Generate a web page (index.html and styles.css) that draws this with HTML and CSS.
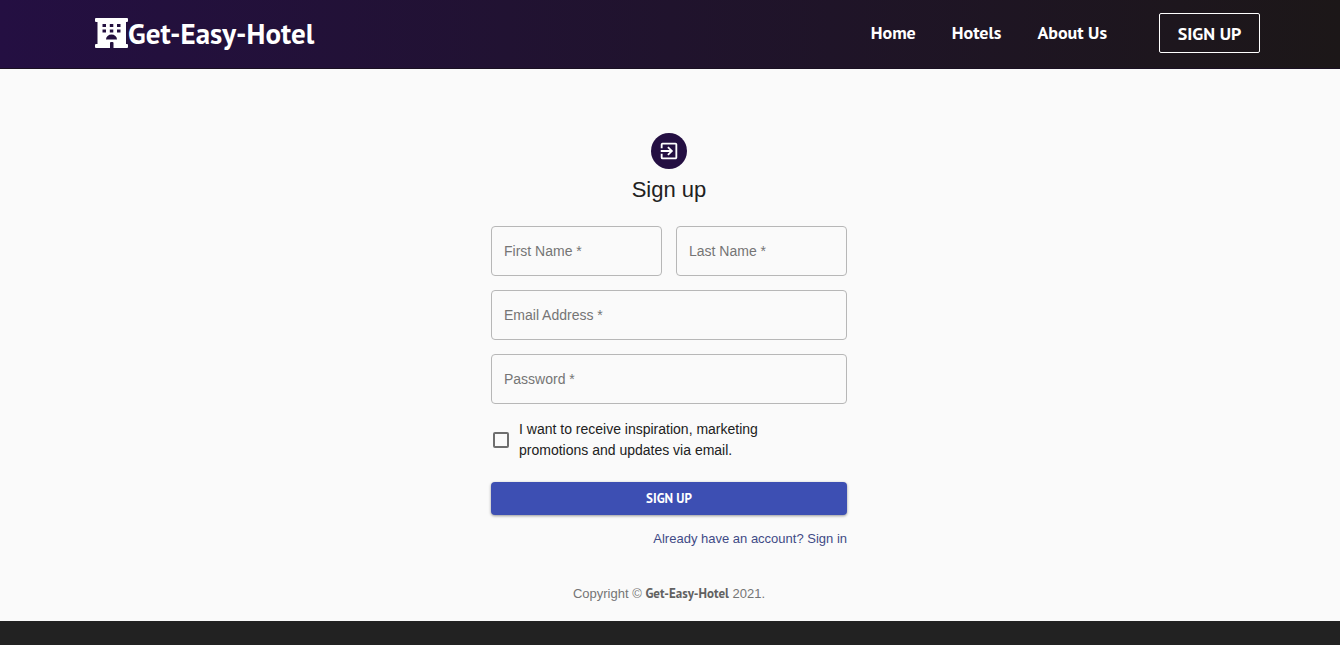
FILE: index.html
```html
<!DOCTYPE html>
<html lang="en">
<head>
<meta charset="utf-8">
<meta name="viewport" content="width=device-width, initial-scale=1">
<title>Get-Easy-Hotel</title>
<link rel="stylesheet" href="styles.css">
</head>
<body>
<header class="navbar">
  <div class="navbar-inner">
    <a class="brand" href="#">
      <svg class="brand-icon" viewBox="0 0 33 30" aria-hidden="true">
        <path fill="#fff" fill-rule="evenodd" d="M1 0H32a1 1 0 0 1 1 1V3a1 1 0 0 1-1 1H31V26H32a1 1 0 0 1 1 1V29a1 1 0 0 1-1 1H18.500V25a1 1 0 0 0-1-1H16a1 1 0 0 0-1 1V30H1a1 1 0 0 1-1-1V27a1 1 0 0 1 1-1H2.500V4H1a1 1 0 0 1-1-1V1a1 1 0 0 1 1-1ZM7.500 6V9H11V6ZM14.800 6V9H18.300V6ZM22 6V9H25.500V6ZM7.500 11.500V14.500H11V11.500ZM14.800 11.500V14.500H18.300V11.500ZM22 11.500V14.500H25.500V11.500ZM11 21.500H22a5.500 5 0 0 0-11 0Z"/>
      </svg>
      <span>Get-Easy-Hotel</span>
    </a>
    <nav class="nav">
      <a class="nav-link" href="#">Home</a>
      <a class="nav-link" href="#">Hotels</a>
      <a class="nav-link" href="#">About Us</a>
      <button class="nav-button" type="button">SIGN UP</button>
    </nav>
  </div>
</header>
<main class="signup">
  <div class="avatar">
    <svg class="avatar-icon" viewBox="0 0 24 24" aria-hidden="true">
      <path fill="#fff" d="M10.090 15.590L11.500 17l5-5-5-5-1.410 1.410L12.670 11H3v2h9.670l-2.580 2.590zM19 3H5a2 2 0 0 0-2 2v4h2V5h14v14H5v-4H3v4a2 2 0 0 0 2 2h14c1.100 0 2-.9 2-2V5c0-1.100-.9-2-2-2z"/>
    </svg>
  </div>
  <h1 class="title">Sign up</h1>
  <form class="form">
    <div class="row">
      <div class="field"><input class="input" id="first" type="text"><label class="label" for="first">First Name *</label></div>
      <div class="field"><input class="input" id="last" type="text"><label class="label" for="last">Last Name *</label></div>
    </div>
    <div class="field"><input class="input" id="email" type="email"><label class="label" for="email">Email Address *</label></div>
    <div class="field"><input class="input" id="password" type="password"><label class="label" for="password">Password *</label></div>
    <div class="consent">
      <input class="checkbox" id="updates" type="checkbox">
      <label class="consent-text" for="updates">I want to receive inspiration, marketing promotions and updates via email.</label>
    </div>
    <button class="submit" type="submit">SIGN UP</button>
    <a class="signin" href="#">Already have an account? Sign in</a>
  </form>
  <p class="copyright">Copyright © <a class="copyright-link" href="#">Get-Easy-Hotel</a> 2021.</p>
</main>
<footer class="footer"></footer>
</body>
</html>
```
FILE: styles.css
```css
*, *::before, *::after { box-sizing: border-box; }
body {
  margin: 0;
  min-height: 100vh;
  display: flex;
  flex-direction: column;
  background: #fafafa;
  font-family: "Liberation Sans", Arial, sans-serif;
  color: #212121;
}
.navbar {
  background: linear-gradient(90deg, #240f42 0%, #1c1718 100%);
  border-bottom: 1px solid #1a1022;
}
.navbar-inner {
  display: flex;
  align-items: center;
  justify-content: space-between;
  height: 68px;
  padding: 0 80px 2px 95px;
}
.brand, .nav-link, .nav-button, .submit, .copyright-link {
  font-family: "PT Sans", "Noto Sans", sans-serif;
  font-weight: 700;
  text-decoration: none;
}
.brand {
  display: flex;
  align-items: center;
  font-size: 29px;
  line-height: 32px;
  color: #fff;
}
.brand-icon { width: 33px; height: 30px; }
.nav { display: flex; align-items: center; gap: 36px; }
.nav-link { font-size: 18px; line-height: 24px; color: #fff; }
.nav-button {
  width: 101px;
  height: 40px;
  margin-left: 16px;
  padding: 0;
  font-size: 18px;
  color: #fff;
  background: transparent;
  border: 1px solid #fff;
  border-radius: 2px;
}
.signup {
  flex: 1;
  width: 100%;
  max-width: 358px;
  margin: 0 auto;
  padding: 64px 2px 18px 0;
  display: flex;
  flex-direction: column;
  align-items: center;
}
.avatar {
  display: grid;
  place-items: center;
  width: 36px;
  height: 36px;
  border-radius: 50%;
  background: #240f42;
}
.avatar-icon { width: 22px; height: 22px; }
.title { margin: 7px 0 22px; font-size: 22px; line-height: 28px; font-weight: 400; }
.form { width: 100%; display: flex; flex-direction: column; gap: 14px; }
.row { display: grid; grid-template-columns: 1fr 1fr; gap: 14px; }
.field { position: relative; }
.input {
  display: block;
  width: 100%;
  height: 50px;
  padding: 0 12px;
  font: inherit;
  font-size: 14px;
  background: transparent;
  border: 1px solid #b7b7b7;
  border-radius: 4px;
}
.label {
  position: absolute;
  left: 13px;
  top: 16px;
  font-size: 14px;
  line-height: 18px;
  color: #757575;
  pointer-events: none;
}
.input:focus + .label { display: none; }
.consent { display: flex; align-items: center; gap: 10px; padding: 1px 0 0 2px; }
.checkbox {
  appearance: none;
  flex: none;
  width: 16px;
  height: 16px;
  margin: 0;
  border: 2px solid #6e6e6e;
  border-radius: 2px;
}
.checkbox:checked { background: #3f51b5; }
.consent-text { max-width: 290px; font-size: 14px; line-height: 21px; }
.submit {
  height: 33px;
  margin-top: 7px;
  font-size: 13px;
  color: #fff;
  background: #3d4fb3;
  border: 0;
  border-radius: 4px;
  box-shadow: 0 1px 3px rgba(0, 0, 0, 0.4);
}
.signin { align-self: flex-end; font-size: 13px; line-height: 20px; color: #3f4a86; text-decoration: none; }
.copyright { margin: 36px 0 0; font-size: 13px; line-height: 18px; color: #757575; }
.copyright-link { font-size: 13px; line-height: 18px; color: #616161; }
.footer { height: 24px; background: #222; }
```
